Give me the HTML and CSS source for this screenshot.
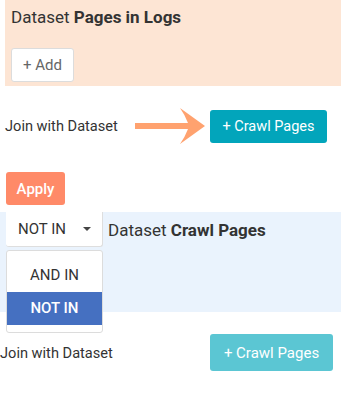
FILE: index.html
```html
<!DOCTYPE html>
<html lang="en">
<head>
    <meta charset="UTF-8">
    <meta name="viewport" content="width=device-width, initial-scale=1.0">
    <title>Dataset Join</title>
    <link rel="stylesheet" href="styles.css">
</head>
<body>

<div class="panel panel-source">
    <div class="panel-title">Dataset <b>Pages in Logs</b></div>
    <button class="btn btn-add">+ Add</button>
</div>

<div class="join-row">
    <span class="join-label">Join with Dataset</span>
    <svg class="arrow" width="70" height="36" viewBox="0 0 70 36">
        <path d="M0,15 H53 Q50,7 45,0 L70,18 L45,36 Q50,29 53,21 H0 Z" fill="#ffa26f"/>
    </svg>
    <button class="btn btn-crawl">+ Crawl Pages</button>
</div>

<button class="btn btn-apply">Apply</button>

<div class="panel panel-target">
    <div class="select">
        <span>NOT IN</span>
        <span class="caret"></span>
    </div>
    <div class="panel-title">Dataset <b>Crawl Pages</b></div>

    <ul class="dropdown">
        <li>AND IN</li>
        <li class="selected">NOT IN</li>
    </ul>
</div>

<div class="join-row join-row-last">
    <span class="join-label">Join with Dataset</span>
    <button class="btn btn-crawl btn-crawl-light">+ Crawl Pages</button>
</div>

</body>
</html>
```

FILE: styles.css
```css
* {
    margin: 0;
    padding: 0;
    box-sizing: border-box;
}

body {
    font-family: 'Roboto', 'Liberation Sans', sans-serif;
    font-size: 14px;
    color: #333;
    background-color: #fff;
    width: 341px;
    overflow: hidden;
}

.btn {
    font-family: inherit;
    border: none;
    border-radius: 3px;
    cursor: pointer;
}

/* Panel atas */
.panel-source {
    margin-left: 5px;
    height: 86px;
    background-color: #fde5d4;
    padding: 7px 6px 0;
}

.panel-title {
    font-size: 17px;
    line-height: 20px;
    color: #333;
}

.panel-title b {
    font-weight: 700;
}

.btn-add {
    display: block;
    margin-top: 21px;
    width: 63px;
    height: 34px;
    background-color: #fff;
    border: 1px solid #dcdcdc;
    color: #666;
    font-size: 15px;
}

/* Baris join */
.join-row {
    display: grid;
    grid-template-columns: 125px 70px auto;
    column-gap: 5px;
    align-items: center;
    margin-top: 22px;
    padding-left: 5px;
    height: 33px;
}

.join-label {
    font-size: 14.6px;
    color: #333;
}

.arrow {
    display: block;
}

.btn-crawl {
    width: 117px;
    height: 33px;
    background-color: #02a5bb;
    color: #fff;
    font-size: 14.5px;
}

.btn-apply {
    display: block;
    margin: 31px 0 0 6px;
    width: 59px;
    height: 33px;
    background-color: #ff8a68;
    color: #fff;
    font-size: 15px;
    font-weight: 500;
}

/* Panel bawah */
.panel-target {
    position: relative;
    display: flex;
    align-items: flex-start;
    margin-top: 7px;
    height: 100px;
    background-color: #eaf3fd;
}

.select {
    display: flex;
    align-items: center;
    justify-content: space-between;
    margin-left: 6px;
    width: 97px;
    height: 35px;
    padding: 0 11px 0 12px;
    background-color: #fff;
    border-right: 1px solid #dedede;
    border-bottom: 1px solid #dedede;
    border-radius: 0 0 3px 3px;
    font-size: 15px;
    color: #333;
}

.caret {
    width: 0;
    height: 0;
    border-left: 4px solid transparent;
    border-right: 4px solid transparent;
    border-top: 4px solid #444;
}

.panel-target .panel-title {
    margin: 8px 0 0 5px;
}

.dropdown {
    position: absolute;
    top: 38px;
    left: 6px;
    width: 97px;
    height: 83px;
    padding: 7px 0;
    list-style: none;
    background-color: #fff;
    border: 1px solid #dcdcdc;
    border-radius: 3px;
    z-index: 2;
}

.dropdown li {
    height: 34px;
    line-height: 34px;
    text-align: center;
    font-size: 15px;
    color: #333;
}

.dropdown li.selected {
    height: 33px;
    line-height: 33px;
    background-color: #4570c1;
    color: #fff;
    font-weight: 500;
}

.join-row-last {
    display: flex;
    justify-content: space-between;
    padding-left: 0;
    padding-right: 8px;
    height: 37px;
}

.btn-crawl-light {
    width: 123px;
    height: 37px;
    background-color: #5bc6d3;
    font-size: 15px;
}
```
